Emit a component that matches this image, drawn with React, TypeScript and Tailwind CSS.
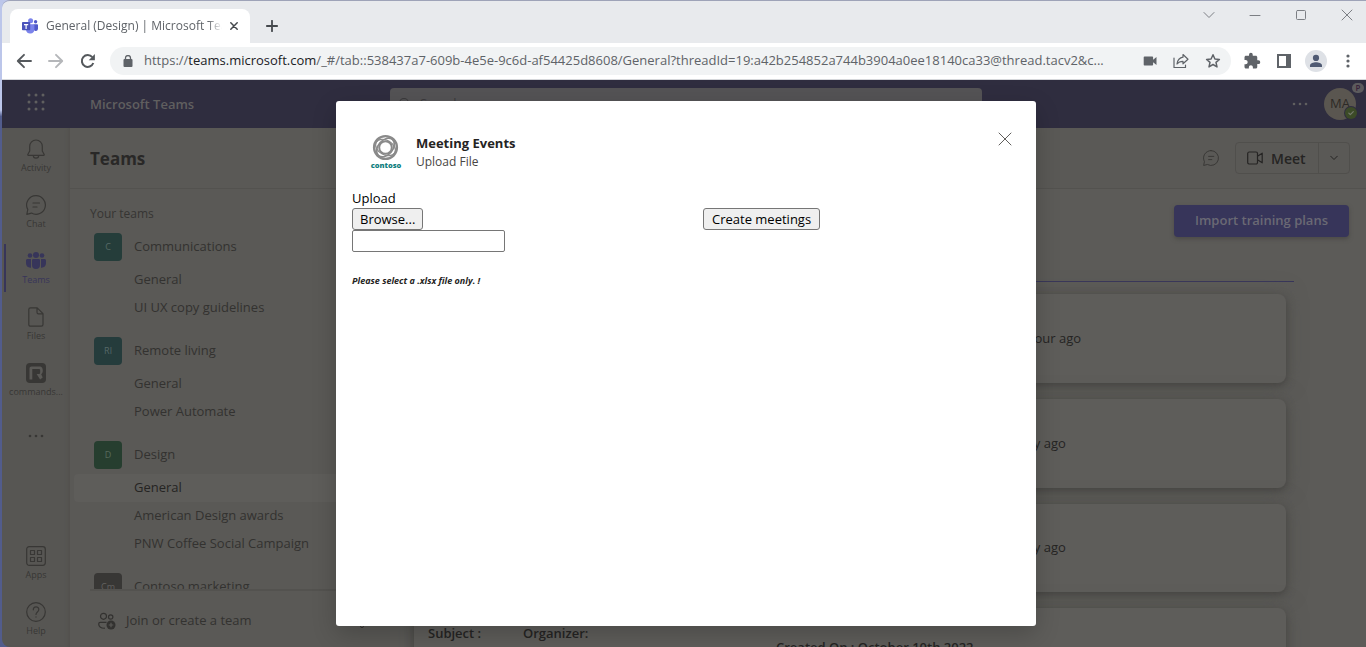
import type { ReactNode } from "react";
import { Settings } from "lucide-react";

type Channel = { name: string; active?: boolean };
type Team = { name: string; initials: string; tile: string; channels: Channel[] };

const teams: Team[] = [
  {
    name: "Communications",
    initials: "C",
    tile: "bg-[#253d3a] text-[#566966]",
    channels: [{ name: "General" }, { name: "UI UX copy guidelines" }],
  },
  {
    name: "Remote living",
    initials: "Rl",
    tile: "bg-[#253c3c] text-[#566868]",
    channels: [{ name: "General" }, { name: "Power Automate" }],
  },
  {
    name: "Design",
    initials: "D",
    tile: "bg-[#263e2f] text-[#566a5c]",
    channels: [
      { name: "General", active: true },
      { name: "American Design awards" },
      { name: "PNW Coffee Social Campaign" },
    ],
  },
  {
    name: "Contoso marketing",
    initials: "Cm",
    tile: "bg-[#383735] text-[#62615f]",
    channels: [],
  },
];

function TeamsLogo() {
  return (
    <svg viewBox="0 0 16 16" className="size-4 shrink-0" aria-hidden="true">
      <circle cx="13.6" cy="3.8" r="1.7" fill="#5059c9" />
      <path d="M11.6 6.3h3.6c.4 0 .8.3.8.8v3.6a2.3 2.3 0 0 1-4.4.9z" fill="#5059c9" />
      <circle cx="8.6" cy="2.8" r="2.5" fill="#7b83eb" />
      <path d="M5 6.3h6.6c.5 0 .8.4.8.8v4.5a4.2 4.2 0 0 1-8.3.7z" fill="#7b83eb" />
      <rect x="0" y="4" width="8.2" height="8.2" rx="0.8" fill="#4b53bc" />
      <path d="M2 6.1h4.2v1.1H4.7v3.9H3.5V7.2H2z" fill="#fff" />
    </svg>
  );
}

function ContosoLogo() {
  return (
    <svg viewBox="0 0 32 36" className="h-9 w-8 shrink-0" role="img" aria-label="Contoso">
      <g fill="none" stroke="#8a8a8a">
        <circle cx="15.5" cy="13.5" r="11.4" strokeWidth="2.4" />
        <circle cx="15.5" cy="13.5" r="6.3" strokeWidth="2" />
        <ellipse cx="15.500" cy="13.500" rx="10.600" ry="7.300" strokeWidth="1.600" transform="rotate(-50 15.500 13.500)" />
        <ellipse cx="15.500" cy="13.500" rx="10.600" ry="7.300" strokeWidth="1.200" transform="rotate(30 15.500 13.500)" />
      </g>
      <text x="16" y="34" textAnchor="middle" fontSize="7.5" fontWeight="800" fill="#128080" fontFamily="Open Sans, sans-serif">
        contoso
      </text>
    </svg>
  );
}

function Line({ className, children, box = 20, width = 1.2 }: { className: string; children: ReactNode; box?: number; width?: number }) {
  return (
    <svg
      viewBox={`0 0 ${box} ${box}`}
      className={className}
      fill="none"
      stroke="currentColor"
      strokeWidth={width}
      strokeLinecap="round"
      strokeLinejoin="round"
      aria-hidden="true"
    >
      {children}
    </svg>
  );
}

function ChatGlyph({ className }: { className: string }) {
  return (
    <Line className={className}>
      <path d="M10 .7A9.300 9.300 0 1 1 5.500 18.100L.8 19.300l1-4.800A9.300 9.300 0 0 1 10 .7zM7 8h6.500M7 12h4" />
    </Line>
  );
}

function Dots({ className }: { className: string }) {
  return (
    <svg viewBox="0 0 16 4" className={className} fill="currentColor" aria-hidden="true">
      <circle cx="2" cy="2" r="1.300" />
      <circle cx="8" cy="2" r="1.300" />
      <circle cx="14" cy="2" r="1.300" />
    </svg>
  );
}

function TabStrip() {
  return (
    <div className="flex h-[42px] shrink-0 items-end justify-between bg-[#e8eaed]">
      <div className="flex items-end">
        <div className="ml-2 flex h-[34px] w-60 items-center rounded-t-lg bg-white pr-3 pl-3">
          <TeamsLogo />
          <span className="ml-2 flex-1 overflow-hidden mask-r-from-92% text-[12px] whitespace-nowrap text-[#5f6368]">
            General (Design) | Microsoft Teams
          </span>
          <button type="button" aria-label="Close tab" className="ml-2 text-[#45494d]">
            <Line className="size-2" box={8} width={1.500}><path d="M.8.8l6.400 6.400M7.200.8L.8 7.200" /></Line>
          </button>
        </div>
        <button type="button" aria-label="New tab" className="flex h-[34px] w-11 items-center justify-center text-[#45494d]">
          <Line className="size-3" box={12} width={1.800}><path d="M6 .8v10.400M.8 6h10.400" /></Line>
        </button>
      </div>
      <div className="flex h-full items-start gap-[34px] pt-2 pr-[13px] text-[#7c7f84]">
        <button type="button" aria-label="Search tabs">
          <Line className="size-3" box={12} width={1}><path d="M1 3.500l5 5 5-5" /></Line>
        </button>
        <button type="button" aria-label="Minimize">
          <Line className="size-3" box={12} width={1}><path d="M1 6.500h10" /></Line>
        </button>
        <button type="button" aria-label="Maximize">
          <Line className="size-3" box={12} width={1}><rect x="1.500" y="1.500" width="9" height="9" rx="1" /></Line>
        </button>
        <button type="button" aria-label="Close window">
          <Line className="size-3" box={12} width={1}><path d="M1 1l10 10M11 1L1 11" /></Line>
        </button>
      </div>
    </div>
  );
}

function Toolbar() {
  return (
    <div className="flex h-[37px] shrink-0 items-center border-b border-[#d5d7da] bg-white pr-4 pl-[14px] text-[#5f6368]">
      <button type="button" aria-label="Back" className="text-[#55595d]">
        <Line className="size-4" box={16} width={1.900}><path d="M15 8H2M8 1.800L1.800 8 8 14.200" /></Line>
      </button>
      <button type="button" aria-label="Forward" className="ml-4 text-[#b5b7ba]">
        <Line className="size-4" box={16} width={1.900}><path d="M1 8h13M8 1.800L14.200 8 8 14.200" /></Line>
      </button>
      <button type="button" aria-label="Reload" className="ml-4 text-[#55595d]">
        <svg viewBox="0 0 16 16" className="size-4" aria-hidden="true">
          <path d="M13.300 10A5.900 5.900 0 1 1 12.300 4.200" fill="none" stroke="currentColor" strokeWidth="2" />
          <path d="M14.900 1v6.200H8.700z" fill="currentColor" />
        </svg>
      </button>
      <div className="ml-[14px] flex h-7 min-w-0 flex-1 items-center rounded-full bg-[#f1f3f4] pr-[10px] pl-3">
        <svg viewBox="0 0 12 12" className="size-3 shrink-0" aria-hidden="true">
          <rect x="1.500" y="4" width="9" height="8" rx="1" fill="currentColor" />
          <path d="M3.500 4.500V3a2.500 2.500 0 0 1 5 0v1.500" fill="none" stroke="currentColor" strokeWidth="1.300" />
        </svg>
        <div className="ml-[10px] min-w-0 flex-1 truncate text-[13px] text-[#5f6368]">
          https://<span className="text-[#202124]">teams.microsoft.com</span>
          /_#/tab::538437a7-609b-4e5e-9c6d-af54425d8608/General?threadId=19:a42b254852a744b3904a0ee18140ca33@thread.tacv2&amp;c...
        </div>
        <div className="ml-4 flex shrink-0 items-center gap-4">
          <button type="button" aria-label="Camera access">
            <svg viewBox="0 0 14 14" className="size-[14px]" fill="currentColor" aria-hidden="true">
              <path d="M1.500 2.500h7.800a.8.8 0 0 1 .8.8v2.400L13.500 3v8l-3.400-2.700v2.400a.8.8 0 0 1-.8.8H1.500a.8.8 0 0 1-.8-.8V3.300a.8.8 0 0 1 .8-.8z" />
            </svg>
          </button>
          <button type="button" aria-label="Share">
            <Line className="size-4" box={16}><path d="M1 5v9.500h11.500V12M10 1.500l5 4.700-5 4.600V8.300C7.500 8.300 5.500 9 4 11c.5-3.500 2.500-6.300 6-6.800z" /></Line>
          </button>
          <button type="button" aria-label="Bookmark">
            <Line className="size-4" box={16} width={1.500}><path d="M8 1.800l1.900 4.200 4.500.4-3.400 3 1 4.500L8 11.500l-4 2.400 1-4.500-3.400-3 4.500-.4z" /></Line>
          </button>
        </div>
      </div>
      <div className="ml-3 flex shrink-0 items-center">
        <button type="button" aria-label="Extensions">
          <svg viewBox="0 0 24 24" className="size-[18px]" fill="currentColor" aria-hidden="true">
            <path d="M20.500 11H19V7c0-1.100-.9-2-2-2h-4V3.500a2.500 2.500 0 0 0-5 0V5H4c-1.100 0-2 .9-2 2v3.800h1.500c1.500 0 2.700 1.200 2.700 2.700S5 16.200 3.500 16.200H2V20c0 1.100.9 2 2 2h3.800v-1.500c0-1.500 1.200-2.700 2.700-2.700s2.700 1.200 2.700 2.700V22H17c1.100 0 2-.9 2-2v-4h1.500a2.500 2.500 0 0 0 0-5z" />
          </svg>
        </button>
        <button type="button" aria-label="Side panel" className="ml-4">
          <svg viewBox="0 0 14 14" className="size-[14px]" fill="currentColor" aria-hidden="true">
            <path d="M0 0h14v14H0zM2 2v10h7V2z" fillRule="evenodd" />
          </svg>
        </button>
        <button type="button" aria-label="Profile" className="ml-[14px] flex size-[22px] items-center justify-center rounded-full bg-[#dee1e6]">
          <svg viewBox="0 0 14 14" className="size-[14px]" fill="#4f5a73" aria-hidden="true">
            <circle cx="7" cy="3.900" r="3.100" />
            <path d="M1 13v-1.500C1 9.500 4.500 8.300 7 8.300s6 1.200 6 3.200V13z" />
          </svg>
        </button>
        <button type="button" aria-label="Browser menu" className="ml-[19px]">
          <svg viewBox="0 0 4 14" className="h-[14px] w-1" fill="currentColor" aria-hidden="true">
            <circle cx="2" cy="2" r="1.600" />
            <circle cx="2" cy="7" r="1.600" />
            <circle cx="2" cy="12" r="1.600" />
          </svg>
        </button>
      </div>
    </div>
  );
}

function AppHeader() {
  return (
    <header className="flex h-12 shrink-0 items-start bg-[#2f2d3f] pr-[10px] text-[#605f5f]">
      <button type="button" aria-label="App launcher" className="mt-3 ml-6">
        <svg viewBox="0 0 20 20" className="size-5" fill="currentColor" aria-hidden="true">
          {[3, 10, 17].map((y) => [3, 10, 17].map((x) => <circle key={`${x}-${y}`} cx={x} cy={y} r="1.500" />))}
        </svg>
      </button>
      <div className="ml-11 w-[300px] pt-[14px] text-[13px] leading-5 font-semibold">Microsoft Teams</div>
      <label className="mt-2 flex h-8 max-w-[592px] flex-1 items-center rounded-sm bg-[#545355] px-2 text-[#3b3a3c]">
        <Line className="size-[14px]" box={14}><path d="M9.500 9.500L13 13M10.500 6a4.500 4.500 0 1 1-9 0 4.500 4.500 0 0 1 9 0z" /></Line>
        <span className="sr-only">Search</span>
        <input type="text" placeholder="Search" className="ml-2 min-w-0 flex-1 bg-transparent text-[13px] placeholder:text-[#3b3a3c]" />
      </label>
      <button type="button" aria-label="More options" className="mt-[22px] ml-auto">
        <Dots className="h-1 w-4" />
      </button>
      <div className="relative mt-2 ml-4 flex size-8 items-center justify-center rounded-full bg-[#5a5650] text-[13px] text-[#2d2a26]">
        MA
        <span className="absolute -top-[5px] -right-2 flex h-[10px] w-3 items-center justify-center rounded-full bg-[#5c5b5d] text-[8px] font-semibold text-[#38213a]">
          P
        </span>
        <span className="absolute -right-px bottom-px flex size-3 items-center justify-center rounded-full bg-[#3c4b27] ring-1 ring-[#2f2d3f]">
          <Line className="size-2 text-[#74796b]" box={8}><path d="M1.800 4.200l1.500 1.500 3-3" /></Line>
        </span>
      </div>
    </header>
  );
}

function RailItem({ label, active, children }: { label: string; active?: boolean; children: ReactNode }) {
  return (
    <a
      href="#"
      className={
        active
          ? "relative flex h-14 flex-col items-center pt-[11px] text-[#37355a] before:absolute before:inset-y-1 before:left-[2px] before:w-[2px] before:bg-[#37355a]"
          : "flex h-14 flex-col items-center pt-[11px] text-[#383735]"
      }
    >
      {children}
      <span className="mt-[3px] text-[9px] leading-3 whitespace-nowrap">{label}</span>
    </a>
  );
}

function Rail() {
  return (
    <nav aria-label="Apps" className="flex w-[68px] shrink-0 flex-col justify-between bg-[#575653] shadow-[inset_-4px_0_4px_-3px_#504f4c]">
      <div className="flex flex-col">
        <RailItem label="Activity">
          <Line className="size-5">
            <path d="M10 1a6.300 6.300 0 0 0-6.300 6.300V12L1.800 15.500c-.2.400 0 .8.500.8h15.400c.5 0 .7-.4.500-.8L16.300 12V7.300A6.300 6.300 0 0 0 10 1zM7.300 16.500a2.700 2.700 0 0 0 5.400 0" />
          </Line>
        </RailItem>
        <RailItem label="Chat">
          <ChatGlyph className="size-5" />
        </RailItem>
        <RailItem label="Teams" active>
          <svg viewBox="0 0 20 20" className="size-5" fill="currentColor" aria-hidden="true">
            <circle cx="4" cy="4.500" r="2.300" />
            <circle cx="10" cy="4" r="3" />
            <circle cx="16" cy="4.500" r="2.300" />
            <path d="M1.500 8H5v8.700c-3 .3-5-1.700-5-4.400V9.500C0 8.700.700 8 1.500 8zM18.500 8H15v8.700c3 .3 5-1.700 5-4.400V9.500c0-.8-.7-1.500-1.500-1.500zM7.300 8h5.400c.8 0 1.300.6 1.300 1.300V14a4 4 0 0 1-8 0V9.300C6 8.600 6.500 8 7.300 8z" />
          </svg>
        </RailItem>
        <RailItem label="Files">
          <Line className="size-5">
            <path d="M4.500.8h6.700l5.800 5.800v10.900c0 .9-.7 1.700-1.700 1.700H4.500c-.9 0-1.700-.7-1.700-1.700v-15C2.800 1.600 3.500.8 4.500.8zM11 1v4.200c0 1 .6 1.600 1.500 1.600h4.300" />
          </Line>
        </RailItem>
        <RailItem label="commands...">
          <svg viewBox="0 0 20 20" className="size-5" aria-hidden="true">
            <rect width="20" height="20" rx="4" fill="currentColor" />
            <path
              d="M3.500 16.500V5.500c0-1.200.8-2 2-2h7.700c3 0 3.600 2.200 3.600 4 0 1.700-.5 3-1.600 3.800l1.500 3.200-2.600 2-3.500-5.500h2.600c.7 0 1-.7 1-2.500s-.2-2.500-1-2.500H6.300v10.500z"
              fill="#5a5956"
            />
          </svg>
        </RailItem>
        <button type="button" aria-label="More apps" className="flex h-14 items-center justify-center text-[#383735]">
          <Dots className="h-1 w-4" />
        </button>
      </div>
      <div className="flex flex-col">
        <RailItem label="Apps">
          <Line className="size-5">
            <rect x=".7" y=".7" width="18.600" height="18.600" rx="2.500" />
            <path d="M4.500 4.500h4v4h-4zM11.500 4.500h4v4h-4zM4.500 11.500h4v4h-4zM11.500 11.500h4v4h-4z" />
          </Line>
        </RailItem>
        <RailItem label="Help">
          <Line className="size-5">
            <circle cx="10" cy="10" r="9.300" />
            <path d="M7.300 7.800C7.300 4 12.800 4 12.800 7.600c0 2.300-2.800 2.400-2.800 4.800M10 14.800v.3" />
          </Line>
        </RailItem>
      </div>
    </nav>
  );
}

function TeamsPanel() {
  return (
    <aside className="flex w-80 shrink-0 flex-col bg-[#5a5956]">
      <div className="flex h-[61px] shrink-0 items-center border-b border-[#53524f] pt-[2px] pl-5">
        <h1 className="text-[17px] font-bold text-[#292827]">Teams</h1>
      </div>
      <div className="min-h-0 flex-1 overflow-hidden">
        <h2 className="mt-[15px] pl-5 text-[12px] leading-5 text-[#363533]">Your teams</h2>
        {teams.map((team) => (
          <section key={team.name} className="mt-[5px] mb-[11px] text-[13px] text-[#333230]">
            <div className="mb-px flex h-[36px] items-center pl-6">
              <span className={`flex size-7 items-center justify-center rounded text-[9px] ${team.tile}`}>{team.initials}</span>
              <h3 className="ml-3">{team.name}</h3>
            </div>
            <ul>
              {team.channels.map((channel) => (
                <li key={channel.name}>
                  <a
                    href="#"
                    className={
                      channel.active
                        ? "ml-1 flex h-7 items-center rounded-l bg-[#5e5d5a] pl-[60px] text-[#252423]"
                        : "ml-1 flex h-7 items-center pl-[60px]"
                    }
                  >
                    {channel.name}
                  </a>
                </li>
              ))}
            </ul>
          </section>
        ))}
      </div>
      <div className="ml-5 flex h-[58px] shrink-0 items-center border-t-2 border-[#53524f] pt-[3px] pr-5 pl-2 text-[#333230]">
        <button type="button" className="flex items-center text-[13px]">
          <svg viewBox="0 0 18 18" className="size-[18px]" fill="none" stroke="currentColor" strokeWidth="1.200" aria-hidden="true">
            <circle cx="5.500" cy="4.300" r="3" />
            <circle cx="12.700" cy="5" r="2.200" />
            <path d="M7 16.200C3 16.500.7 14.800.7 12c0-1 .7-1.700 1.600-1.700h6.200" />
            <circle cx="13" cy="13" r="4.500" fill="currentColor" stroke="none" />
            <path d="M13 10.700v4.600M10.700 13h4.600" stroke="#5a5956" />
          </svg>
          <span className="ml-[10px]">Join or create a team</span>
        </button>
        <button type="button" aria-label="Manage teams" className="ml-auto">
          <Settings className="size-4" strokeWidth={1.5} />
        </button>
      </div>
    </aside>
  );
}

function MainArea() {
  return (
    <main className="flex min-w-0 flex-1 flex-col overflow-hidden bg-[#5c5b58] text-[#252423]">
      <div className="flex h-[61px] shrink-0 items-center justify-end border-b border-[#53524f] bg-[#5a5956] pr-4">
        <button type="button" aria-label="Conversation" className="mr-4 text-[#383735]">
          <ChatGlyph className="size-4" />
        </button>
        <div className="flex h-8 rounded border border-[#504f4c]">
          <button type="button" className="flex w-[83px] items-center gap-2 border-r border-[#504f4c] pl-[11px] text-[14px] font-semibold">
            <Line className="h-4 w-4" box={16}><path d="M2 2h7a1.500 1.500 0 0 1 1.500 1.500v9A1.500 1.500 0 0 1 9 14H2A1.500 1.500 0 0 1 .7 12.500v-9A1.500 1.500 0 0 1 2 2zM10.500 6.300l4.700-3.100v9.600l-4.700-3.100" /></Line>
            Meet
          </button>
          <button type="button" aria-label="Meeting options" className="flex w-[30px] items-center justify-center">
            <Line className="size-2" box={8} width={1}><path d="M.7 2.200L4 5.500l3.300-3.300" /></Line>
          </button>
        </div>
      </div>
      <div className="flex shrink-0 justify-end pt-4 pr-[17px]">
        <button type="button" className="h-8 rounded bg-[#37355a] px-[21px] text-[13px] font-semibold text-[#6a6974] shadow-[0_2px_4px_#4b4a47]">
          Import training plans
        </button>
      </div>
      <div className="mt-11 mr-[72px] ml-4 shrink-0 border-t border-[#37355a]" />
      <div className="mt-3 mr-20 ml-6 flex flex-col gap-4">
        <article className="flex h-[89px] shrink-0 items-center rounded-lg bg-[#5e5d5a] text-[13px] shadow-[0_3px_8px_#464542,0_0_20px_#555451]">
          <p className="ml-auto w-[278px]">an hour ago</p>
        </article>
        <article className="flex h-[89px] shrink-0 items-center rounded-lg bg-[#5e5d5a] text-[13px] shadow-[0_3px_8px_#464542,0_0_20px_#555451]">
          <p className="ml-auto w-[278px]">a day ago</p>
        </article>
        <article className="flex h-[88px] shrink-0 items-center rounded-lg bg-[#5e5d5a] text-[13px] shadow-[0_3px_8px_#464542,0_0_20px_#555451]">
          <p className="ml-auto w-[278px]">a day ago</p>
        </article>
        <article className="flex h-[89px] shrink-0 items-start rounded-lg bg-[#5e5d5a] pt-[15px] text-[13px] font-semibold shadow-[0_3px_8px_#464542,0_0_20px_#555451]">
          <p className="w-[95px] pl-[14px] leading-5">Subject :</p>
          <p className="pl-[14px] leading-5">Organizer:</p>
          <p className="mt-[14px] ml-auto w-[510px] leading-5">Created On : October 10th 2022</p>
        </article>
      </div>
    </main>
  );
}

function UploadDialog() {
  return (
    <section
      role="dialog"
      aria-modal="true"
      aria-labelledby="dialog-title"
      className="h-[525px] max-h-full w-[700px] max-w-full rounded-[3px] bg-white px-4 pt-[30px] shadow-[0_8px_24px_rgba(0,0,0,0.2)]"
    >
      <div className="flex items-start">
        <div className="mt-[3px] ml-[18px]">
          <ContosoLogo />
        </div>
        <div className="ml-[14px] pt-[2px]">
          <h2 id="dialog-title" className="text-[13px] leading-5 font-bold text-[#252423]">Meeting Events</h2>
          <p className="text-[12px] leading-[18px] text-[#484644]">Upload File</p>
        </div>
        <button type="button" aria-label="Close dialog" className="mt-[1px] mr-[8px] ml-auto text-[#605e5c]">
          <Line className="size-[14px]" box={14} width={1}><path d="M1 1l12 12M13 1L1 13" /></Line>
        </button>
      </div>
      <form className="mt-[17px] text-[13px] text-black">
        <label htmlFor="file-name" className="block leading-5">Upload</label>
        <div className="grid grid-cols-2 items-start gap-x-[34px]">
          <div className="flex flex-col items-start">
            <button type="button" className="h-[22px] rounded-[3px] border border-[#767676] bg-[#efefef] px-[7px] leading-5">
              Browse...
            </button>
            <input id="file-name" type="text" className="h-[22px] w-[153px] rounded-[2px] border border-[#767676] px-1" />
          </div>
          <button type="button" className="h-[22px] justify-self-start rounded-[3px] border border-[#767676] bg-[#efefef] px-2 leading-5">
            Create meetings
          </button>
        </div>
        <p className="mt-[23px] text-[9px] leading-3 font-bold text-[#252423] italic">Please select a .xlsx file only. !</p>
      </form>
    </section>
  );
}

export default function App() {
  return (
    <div className="h-screen overflow-hidden bg-linear-to-b from-[#bcc6ea] from-17% to-[#525c8c] to-18% pl-[2px] font-['Open_Sans','Noto_Sans',sans-serif]">
      <div className="flex h-full flex-col overflow-hidden rounded-tl-lg rounded-bl-lg border-t border-[#9ea3b8]">
        <TabStrip />
        <Toolbar />
        <div className="relative flex min-h-0 flex-1 flex-col">
          <AppHeader />
          <div className="flex min-h-0 flex-1">
            <Rail />
            <TeamsPanel />
            <MainArea />
          </div>
          <div className="absolute inset-0 flex items-center justify-center pl-1">
            <UploadDialog />
          </div>
        </div>
      </div>
    </div>
  );
}
